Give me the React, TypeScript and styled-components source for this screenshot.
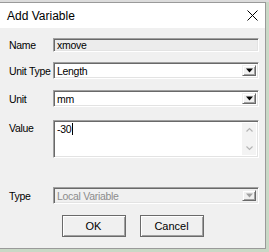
import React from 'react';
import styled, { createGlobalStyle } from 'styled-components';

const GlobalStyle = createGlobalStyle`
  html, body {
    margin: 0;
    padding: 0;
    background: #c9d8c6;
  }
  body {
    font-family: "Liberation Sans", Arial, sans-serif;
  }
`;

const Page = styled.div`
  width: 269px;
  height: 252px;
  padding-top: 2px;
  box-sizing: border-box;
  background: linear-gradient(#dcdcdc, #dcdcdc) top left / 269px 2px no-repeat, #c9d8c6;
`;

const Dialog = styled.div`
  width: 266px;
  height: 247px;
  box-sizing: border-box;
  border: 1px solid #9a9a9a;
  border-left: none;
  background: #f0f0f0;
  display: flex;
  flex-direction: column;
`;

const TitleBar = styled.div`
  height: 25px;
  background: #fff;
  display: flex;
  align-items: center;
  justify-content: space-between;
  padding: 0 7px 0 7px;
`;

const Title = styled.span`
  font-size: 12px;
  color: #000;
`;

const Body = styled.div`
  flex: 1;
  padding: 10px 6px 0 9px;
  display: flex;
  flex-direction: column;
`;

const Row = styled.div<{ $top: number }>`
  display: flex;
  align-items: center;
  margin-top: ${p => p.$top}px;
`;

const Label = styled.div<{ $top?: boolean }>`
  width: 44px;
  flex-shrink: 0;
  font-size: 10.5px;
  letter-spacing: -0.3px;
  white-space: nowrap;
  color: #000;
  align-self: ${p => (p.$top ? 'flex-start' : 'center')};
  padding-top: ${p => (p.$top ? '2px' : '0')};
`;

const Sunken = styled.div<{ $h: number; $bg?: string }>`
  flex: 1;
  height: ${p => p.$h}px;
  box-sizing: border-box;
  background: ${p => p.$bg || '#fff'};
  border-top: 1px solid #a0a0a0;
  border-left: 1px solid #a0a0a0;
  border-right: 1px solid #fff;
  border-bottom: 1px solid #fff;
  box-shadow: inset 1px 1px 0 #696969, inset -1px -1px 0 #e3e3e3;
  display: flex;
  align-items: center;
  font-size: 10.5px;
  letter-spacing: -0.3px;
  position: relative;
`;

const FieldText = styled.span<{ $muted?: boolean }>`
  flex: 1;
  padding-left: 3px;
  color: ${p => (p.$muted ? '#8c8c8c' : '#000')};
  white-space: nowrap;
`;

const ArrowButton = styled.div`
  width: 14px;
  box-sizing: border-box;
  margin: 2px 2px 2px 0;
  background: #f0f0f0;
  border-top: 1px solid #f0f0f0;
  border-left: 1px solid #f0f0f0;
  border-right: 1px solid #696969;
  border-bottom: 1px solid #696969;
  box-shadow: inset 1px 1px 0 #fff, inset -1px -1px 0 #a0a0a0;
  display: flex;
  align-items: center;
  justify-content: center;
  align-self: stretch;
`;

const TextArea = styled(Sunken)`
  align-items: flex-start;
`;

const ValueText = styled.span`
  flex: 1;
  padding: 2px 0 0 3px;
  display: flex;
  align-items: center;
`;

const Caret = styled.span`
  display: inline-block;
  width: 1px;
  height: 12px;
  background: #000;
  margin-left: 1px;
`;

const ScrollBar = styled.div`
  width: 14px;
  align-self: stretch;
  margin: 2px 2px 2px 0;
  background: #f3f3f3;
  display: flex;
  flex-direction: column;
  justify-content: space-between;
  align-items: center;
  padding: 4px 0;
`;

const Buttons = styled.div`
  display: flex;
  justify-content: center;
  gap: 14px;
  margin-top: 11px;
  margin-left: -9px;
  margin-right: -6px;
`;

const Button = styled.div`
  width: 64px;
  height: 22px;
  box-sizing: border-box;
  border: 1px solid #6a6a6a;
  background: #f0f0f0;
  box-shadow: inset 1px 1px 0 #fff, inset -1px -1px 0 #a0a0a0;
  display: flex;
  align-items: center;
  justify-content: center;
  font-size: 11px;
  color: #000;
`;

const Down = ({ color }: { color: string }) => (
  <svg width="7" height="5" viewBox="0 0 7 5">
    <path d="M0 0.5h7L3.5 4.5z" fill={color} />
  </svg>
);

const Chevron = ({ up }: { up?: boolean }) => (
  <svg width="7" height="5" viewBox="0 0 7 5">
    <path
      d={up ? 'M0.5 4.5L3.5 1.5L6.5 4.5' : 'M0.5 0.5L3.5 3.5L6.5 0.5'}
      fill="none"
      stroke="#b5b5b5"
      strokeWidth="1.2"
    />
  </svg>
);

const CloseIcon = () => (
  <svg width="11" height="11" viewBox="0 0 11 11">
    <path d="M0.5 0.5L10.5 10.5M10.5 0.5L0.5 10.5" stroke="#000" strokeWidth="1" />
  </svg>
);

const App: React.FC = () => {
  return (
    <>
      <GlobalStyle />
      <Page>
        <Dialog>
          <TitleBar>
            <Title>Add Variable</Title>
            <CloseIcon />
          </TitleBar>
          <Body>
            <Row $top={0}>
              <Label>Name</Label>
              <Sunken $h={14} $bg="#ececec">
                <FieldText>xmove</FieldText>
              </Sunken>
            </Row>
            <Row $top={10}>
              <Label>Unit Type</Label>
              <Sunken $h={17}>
                <FieldText>Length</FieldText>
                <ArrowButton><Down color="#000" /></ArrowButton>
              </Sunken>
            </Row>
            <Row $top={11}>
              <Label>Unit</Label>
              <Sunken $h={17}>
                <FieldText>mm</FieldText>
                <ArrowButton><Down color="#000" /></ArrowButton>
              </Sunken>
            </Row>
            <Row $top={13}>
              <Label $top>Value</Label>
              <TextArea $h={38}>
                <ValueText>-30<Caret /></ValueText>
                <ScrollBar>
                  <Chevron up />
                  <Chevron />
                </ScrollBar>
              </TextArea>
            </Row>
            <Row $top={29}>
              <Label>Type</Label>
              <Sunken $h={17} $bg="#f0f0f0">
                <FieldText $muted>Local Variable</FieldText>
                <ArrowButton><Down color="#a0a0a0" /></ArrowButton>
              </Sunken>
            </Row>
            <Buttons>
              <Button>OK</Button>
              <Button>Cancel</Button>
            </Buttons>
          </Body>
        </Dialog>
      </Page>
    </>
  );
};

export default App;
